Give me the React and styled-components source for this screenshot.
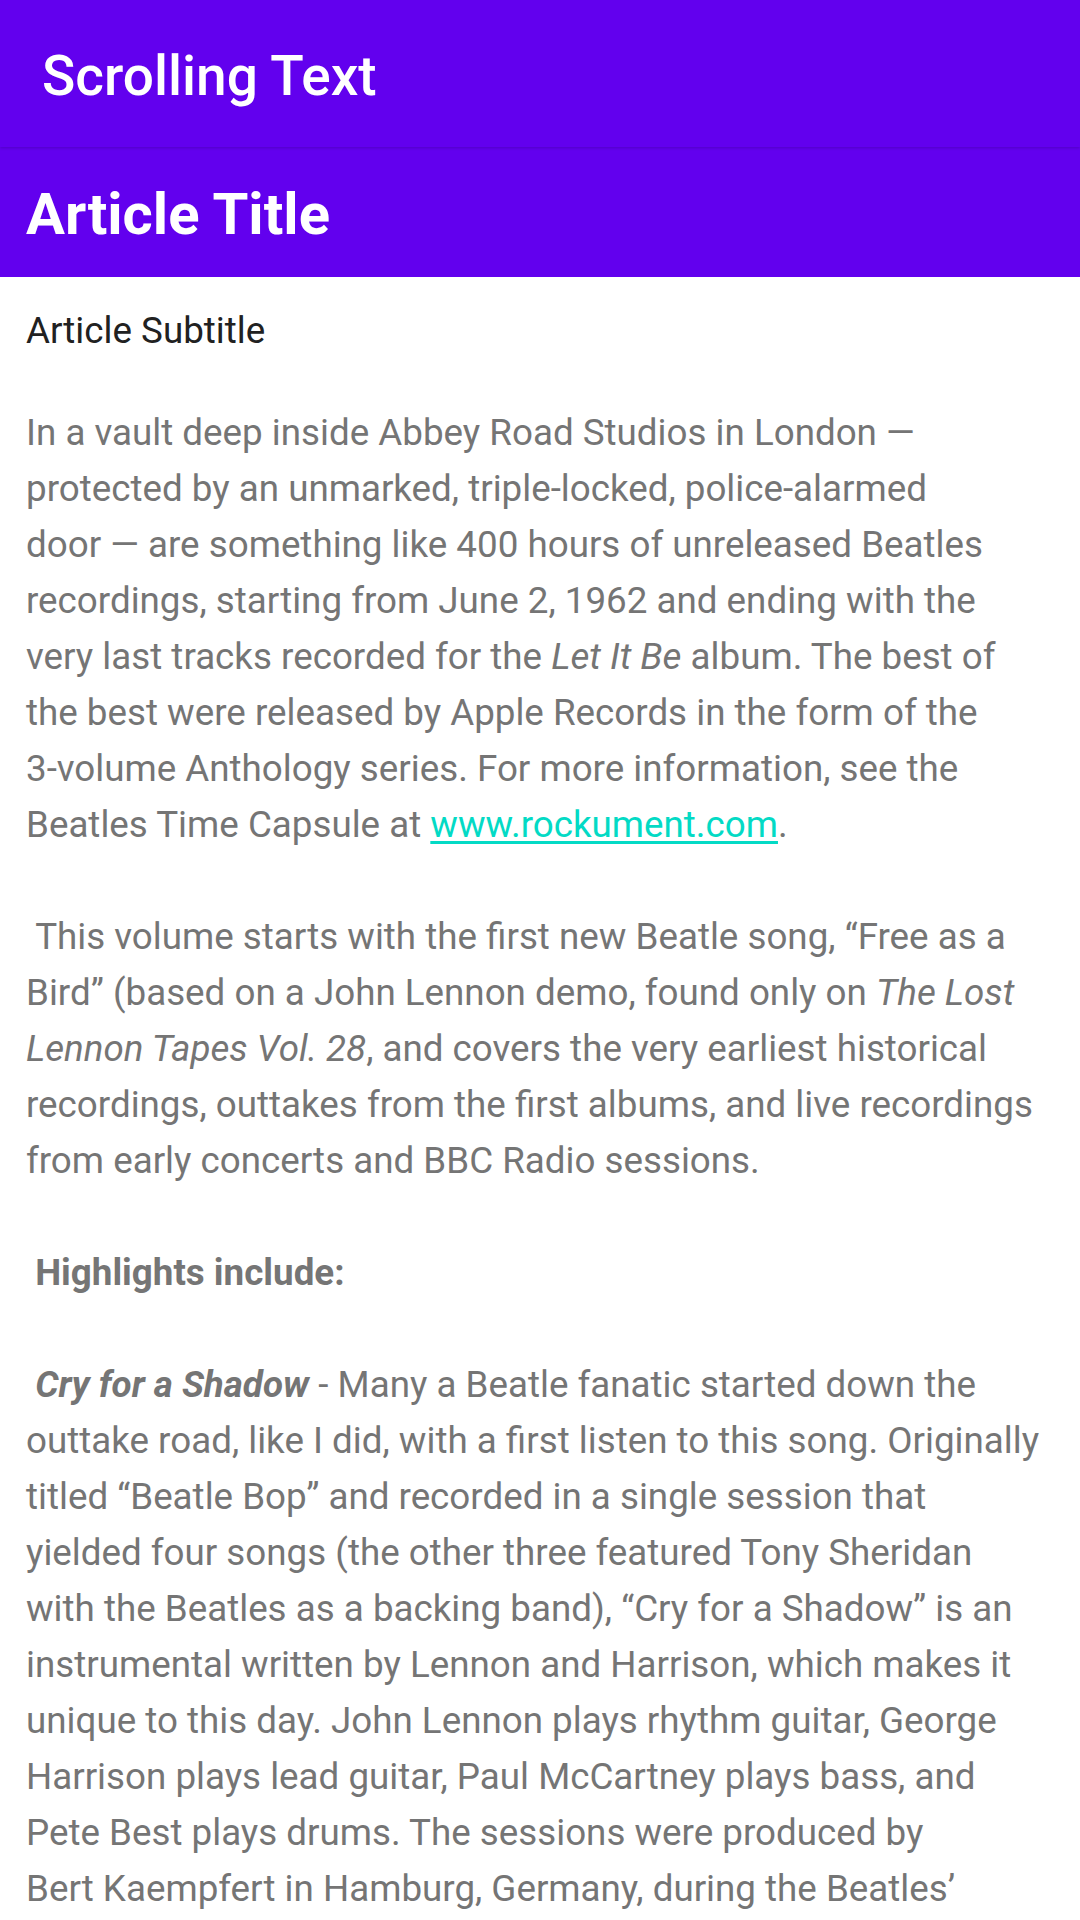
import React from 'react';
import styled, { createGlobalStyle } from 'styled-components';

const GlobalStyle = createGlobalStyle`
  html, body {
    margin: 0;
    padding: 0;
    background: #ffffff;
    font-family: Roboto, 'Noto Sans', sans-serif;
  }
`;

const Screen = styled.div`
  width: 1080px;
  min-height: 1920px;
  background: #ffffff;
  overflow: hidden;
`;

const Toolbar = styled.header`
  position: relative;
  z-index: 1;
  box-sizing: border-box;
  height: 147px;
  padding: 44px 42px 0;
  background: #6200ee;
  box-shadow: 0 1px 3px rgba(0, 0, 0, 0.18);
`;

const ToolbarTitle = styled.h1`
  margin: 0;
  font-size: 55px;
  font-weight: 500;
  line-height: 1.172;
  color: #ffffff;
`;

const TitleBand = styled.div`
  box-sizing: border-box;
  height: 130px;
  padding: 34px 26px 0;
  background: #6200ee;
`;

const ArticleTitle = styled.h2`
  margin: 0;
  font-size: 58px;
  font-weight: 700;
  line-height: 1.172;
  color: #ffffff;
`;

const Content = styled.main`
  padding: 32px 26px 0;
`;

const Subtitle = styled.h3`
  margin: 0;
  font-size: 36.75px;
  font-weight: 400;
  line-height: 43px;
  color: #212121;
`;

const Body = styled.p`
  margin: 53px 0 0;
  font-size: 36.75px;
  font-weight: 400;
  line-height: 56px;
  color: #757575;
  white-space: pre-wrap;
`;

const Link = styled.a`
  color: #03dac5;
  text-decoration: underline;
  text-underline-offset: 4px;
`;

const Strong = styled.b`
  font-weight: 700;
`;

export default function App() {
  return (
    <Screen>
      <GlobalStyle />
      <Toolbar>
        <ToolbarTitle>Scrolling Text</ToolbarTitle>
      </Toolbar>
      <TitleBand>
        <ArticleTitle>Article Title</ArticleTitle>
      </TitleBand>
      <Content>
        <Subtitle>Article Subtitle</Subtitle>
        <Body>
          {'In a vault deep inside Abbey Road Studios in London —\n'}
          {'protected by an unmarked, triple-locked, police-alarmed\n'}
          {'door — are something like 400 hours of unreleased Beatles\n'}
          {'recordings, starting from June 2, 1962 and ending with the\n'}
          {'very last tracks recorded for the '}
          <i>Let It Be</i>
          {' album. The best of\n'}
          {'the best were released by Apple Records in the form of the\n'}
          {'3-volume Anthology series. For more information, see the\n'}
          {'Beatles Time Capsule at '}
          <Link href="#">www.rockument.com</Link>
          {'.\n\n'}
          {' This volume starts with the first new Beatle song, “Free as a\n'}
          {'Bird” (based on a John Lennon demo, found only on '}
          <i>The Lost{'\n'}Lennon Tapes Vol. 28</i>
          {', and covers the very earliest historical\n'}
          {'recordings, outtakes from the first albums, and live recordings\n'}
          {'from early concerts and BBC Radio sessions.\n\n '}
          <Strong>Highlights include:</Strong>
          {'\n\n '}
          <Strong><i>Cry for a Shadow</i></Strong>
          {' - Many a Beatle fanatic started down the\n'}
          {'outtake road, like I did, with a first listen to this song. Originally\n'}
          {'titled “Beatle Bop” and recorded in a single session that\n'}
          {'yielded four songs (the other three featured Tony Sheridan\n'}
          {'with the Beatles as a backing band), “Cry for a Shadow” is an\n'}
          {'instrumental written by Lennon and Harrison, which makes it\n'}
          {'unique to this day. John Lennon plays rhythm guitar, George\n'}
          {'Harrison plays lead guitar, Paul McCartney plays bass, and\n'}
          {'Pete Best plays drums. The sessions were produced by\n'}
          {'Bert Kaempfert in Hamburg, Germany, during the Beatles’\n'}
          {'first extended stay in the city, and the song was later\n'}
          {'issued as a single.'}
        </Body>
      </Content>
    </Screen>
  );
}
